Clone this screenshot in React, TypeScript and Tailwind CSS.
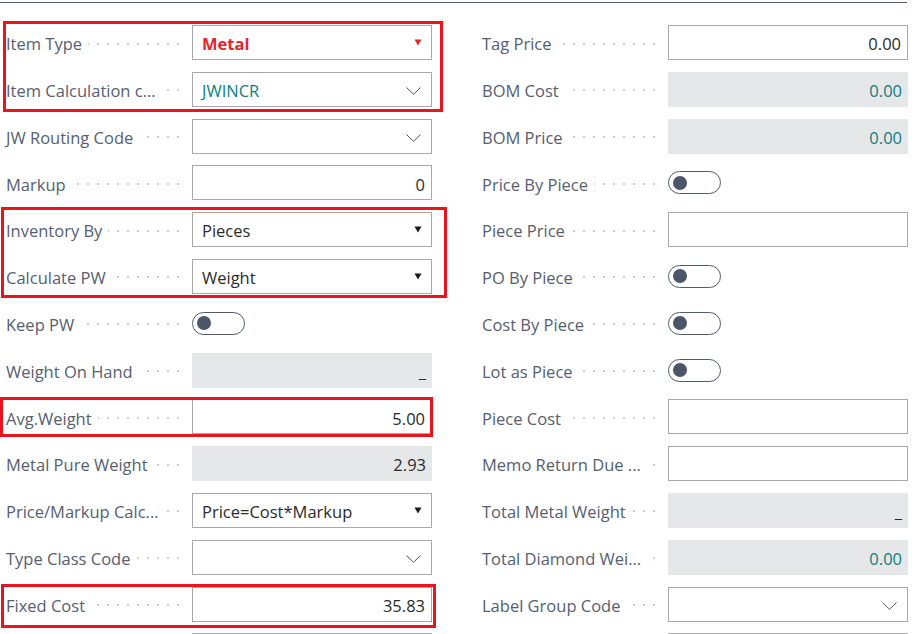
import React from "react";

type Kind = "select" | "lookup" | "input" | "readonly" | "toggle" | "none";
type Field = {
  label: string;
  kind: Kind;
  value?: string;
  tone?: "red" | "teal" | "dark";
};

const left: Field[] = [
  { label: "Item Type", kind: "select", value: "Metal", tone: "red" },
  { label: "Item Calculation c...", kind: "lookup", value: "JWINCR", tone: "teal" },
  { label: "JW Routing Code", kind: "lookup", value: "" },
  { label: "Markup", kind: "input", value: "0" },
  { label: "Inventory By", kind: "select", value: "Pieces" },
  { label: "Calculate PW", kind: "select", value: "Weight" },
  { label: "Keep PW", kind: "toggle" },
  { label: "Weight On Hand", kind: "readonly", value: "_" },
  { label: "Avg.Weight", kind: "input", value: "5.00" },
  { label: "Metal Pure Weight", kind: "readonly", value: "2.93" },
  { label: "Price/Markup Calc...", kind: "select", value: "Price=Cost*Markup" },
  { label: "Type Class Code", kind: "lookup", value: "" },
  { label: "Fixed Cost", kind: "input", value: "35.83" },
  { label: "", kind: "input", value: "" },
];

const right: Field[] = [
  { label: "Tag Price", kind: "input", value: "0.00" },
  { label: "BOM Cost", kind: "readonly", value: "0.00", tone: "teal" },
  { label: "BOM Price", kind: "readonly", value: "0.00", tone: "teal" },
  { label: "Price By Piece", kind: "toggle" },
  { label: "Piece Price", kind: "input", value: "" },
  { label: "PO By Piece", kind: "toggle" },
  { label: "Cost By Piece", kind: "toggle" },
  { label: "Lot as Piece", kind: "toggle" },
  { label: "Piece Cost", kind: "input", value: "" },
  { label: "Memo Return Due ...", kind: "input", value: "" },
  { label: "Total Metal Weight", kind: "readonly", value: "_" },
  { label: "Total Diamond Wei...", kind: "readonly", value: "0.00", tone: "teal" },
  { label: "Label Group Code", kind: "lookup", value: "" },
  { label: "", kind: "input", value: "" },
];

function Dots() {
  const dots = Array.from({ length: 24 });
  return (
    <div className="flex-1 ml-[6px] mr-[13px] h-[4px] overflow-hidden flex justify-end items-center gap-[8px] translate-y-[1px]">
      {dots.map((_, i) => (
        <span key={i} className="shrink-0 w-[2px] h-[2px] rounded-full bg-[#b8bcc2]" />
      ))}
    </div>
  );
}

function Triangle({ red }: { red?: boolean }) {
  return (
    <svg width="8" height="7" viewBox="0 0 8 7" className="shrink-0">
      <path d="M0.5 0.5 L7.5 0.5 L4 6.5 Z" fill={red ? "#e3262d" : "#1a1a1a"} />
    </svg>
  );
}

function Chevron() {
  return (
    <svg width="15" height="8" viewBox="0 0 15 8" className="shrink-0 translate-y-[2px]">
      <path d="M0.5 0.5 L7.5 7.3 L14.5 0.5" fill="none" stroke="#555" strokeWidth="1" />
    </svg>
  );
}

function toneClass(t?: string) {
  if (t === "red") return "text-[#e3262d] font-bold";
  if (t === "teal") return "text-[#0b7f80]";
  return "text-[#2b2b2b]";
}

function Control({ f }: { f: Field }) {
  if (f.kind === "toggle") {
    return (
      <div className="w-[240px] h-[35px] flex items-center">
        <div className="w-[53px] h-[23px] rounded-full border border-[#505c6d] flex items-center pl-[4px] bg-white">
          <div className="w-[14px] h-[14px] rounded-full bg-[#4b566a]" />
        </div>
      </div>
    );
  }
  if (f.kind === "readonly") {
    return (
      <div className={`w-[240px] h-[35px] bg-[#e6e7e9] flex items-center justify-end pr-[6px] ${toneClass(f.tone)}`}>
        <span className="translate-y-[1.5px]">{f.value}</span>
      </div>
    );
  }
  if (f.kind === "input") {
    return (
      <div className={`w-[240px] h-[35px] bg-white border border-[#a9a9a9] flex items-center justify-end pr-[6px] ${toneClass(f.tone)}`}>
        <span className="translate-y-[1.5px]">{f.value}</span>
      </div>
    );
  }
  if (f.kind === "select") {
    return (
      <div className="w-[240px] h-[35px] bg-white border border-[#a9a9a9] flex items-center pl-[9px] pr-[9px]">
        <span className={`flex-1 whitespace-nowrap translate-y-[1.5px] ${toneClass(f.tone)}`}>{f.value}</span>
        <Triangle red={f.tone === "red"} />
      </div>
    );
  }
  return (
    <div className="w-[240px] h-[35px] bg-white border border-[#a9a9a9] flex items-center pl-[9px] pr-[10px]">
      <span className={`flex-1 whitespace-nowrap translate-y-[1.5px] ${toneClass(f.tone)}`}>{f.value}</span>
      <Chevron />
    </div>
  );
}

function Row({ f }: { f: Field }) {
  return (
    <div className="flex items-center h-[35px]">
      <div className="w-[186px] flex items-center h-full">
        <span className="whitespace-nowrap text-[#56606f] translate-y-[1.5px]">{f.label}</span>
        {f.label ? <Dots /> : null}
      </div>
      <Control f={f} />
    </div>
  );
}

function Column({ fields }: { fields: Field[] }) {
  return (
    <div className="flex flex-col gap-y-[11.8px] w-[426px]">
      {fields.map((f, i) => (
        <Row key={i} f={f} />
      ))}
    </div>
  );
}

export default function App() {
  return (
    <div
      className="relative w-[919px] h-[634px] overflow-hidden bg-white text-[16.5px] leading-none"
      style={{ fontFamily: '"Open Sans", "Noto Sans", sans-serif' }}
    >
      <div className="mt-[2px] w-[907px] h-px bg-[#505c6d]" />
      <div className="mt-[22px] pl-[6px] flex gap-x-[50px]">
        <Column fields={left} />
        <Column fields={right} />
      </div>

      <div className="absolute left-[3px] top-[21px] w-[440px] h-[91px] border-[3px] border-[#e8141f] pointer-events-none" />
      <div className="absolute left-[1px] top-[207px] w-[446px] h-[91px] border-[3px] border-[#e8141f] pointer-events-none" />
      <div className="absolute left-0 top-[397px] w-[433px] h-[40px] border-[3px] border-[#e8141f] pointer-events-none" />
      <div className="absolute left-[1px] top-[584px] w-[435px] h-[44px] border-[3px] border-[#e8141f] pointer-events-none" />
    </div>
  );
}
